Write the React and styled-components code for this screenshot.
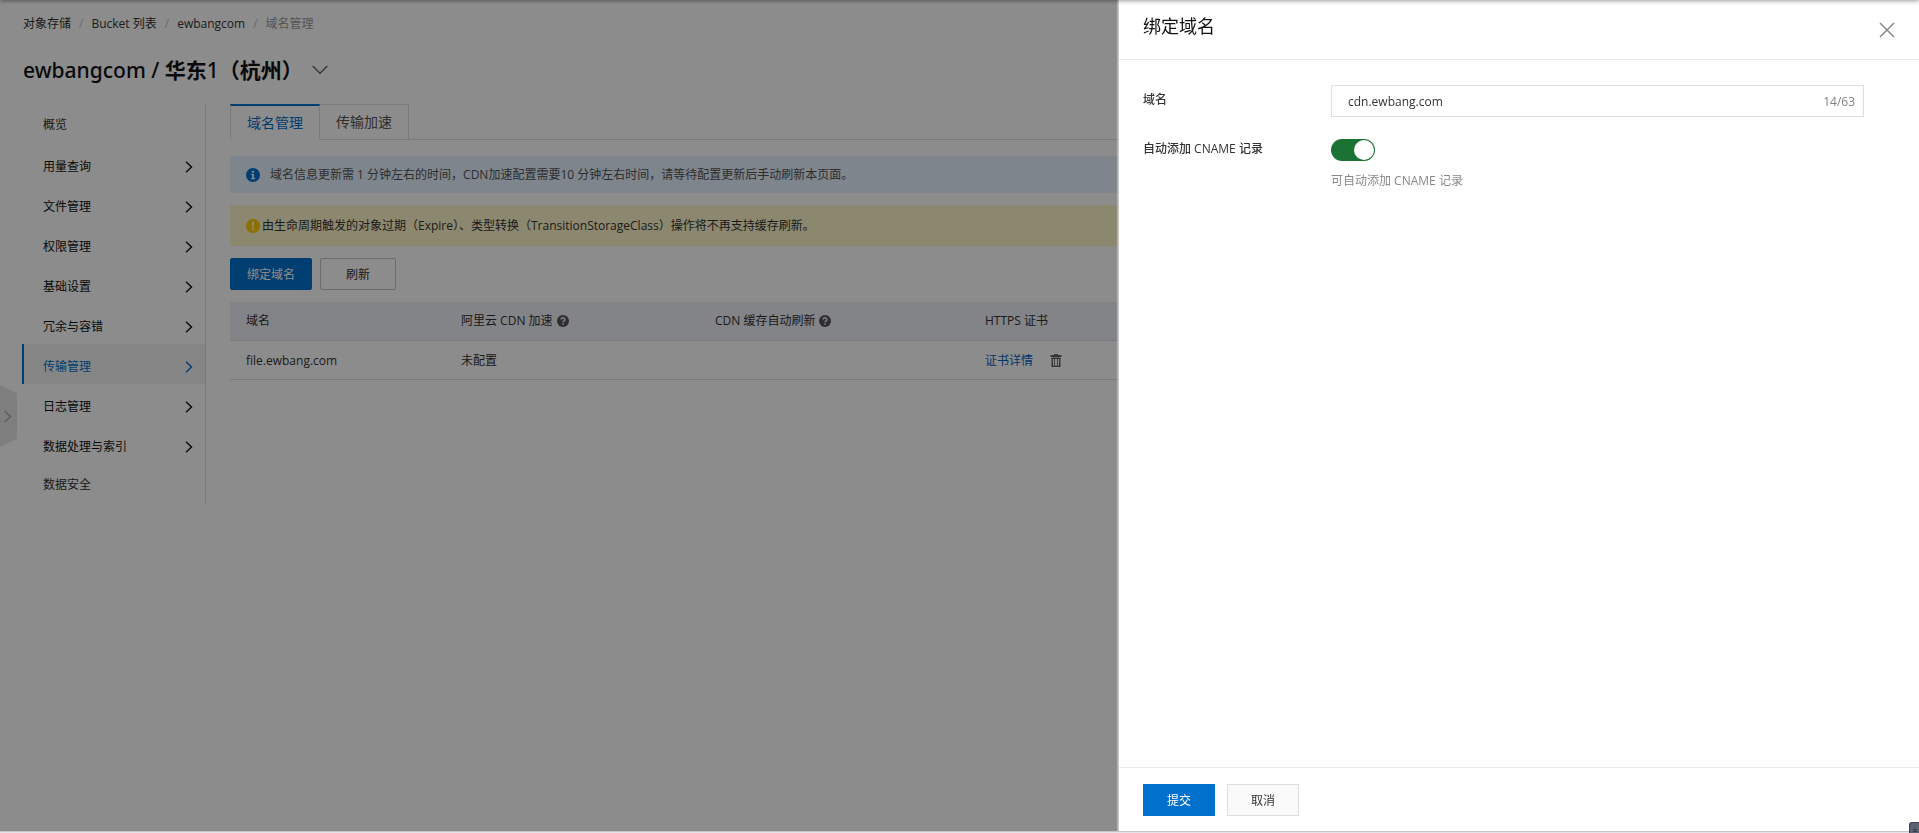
import React, { useState } from "react";
import styled, { createGlobalStyle, css } from "styled-components";

const GlobalStyle = createGlobalStyle`
  *, *::before, *::after { box-sizing: border-box; }
  body {
    margin: 0;
    background: #fff;
    color: #333;
    font: 12px/18px "Open Sans", "Noto Sans CJK SC", sans-serif;
  }
  button, input { font: inherit; color: inherit; }
  a { color: inherit; text-decoration: none; }
`;

const Page = styled.div`
  position: relative;
  min-height: 100vh;
  overflow: hidden;
`;

const TopShadow = styled.div`
  position: fixed;
  inset: -6px 0 auto;
  height: 6px;
  box-shadow: 0 1px 4px rgba(0, 0, 0, 0.4);
  z-index: 30;
`;

const BottomEdge = styled.div`
  position: fixed;
  inset: auto 0 0;
  height: 2px;
  background: #e4e4ea;
  border-top: 1px solid #c4c4cc;
  z-index: 30;
`;

const Header = styled.header`
  padding: 15px 23px 0;
`;

const Breadcrumb = styled.nav`
  display: flex;
  gap: 8px;
  a { color: #333; }
  i { color: #c1c1c1; font-style: normal; }
  span { color: #999; }
`;

const TitleRow = styled.div`
  display: flex;
  align-items: center;
  gap: 9px;
  margin-top: 21px;
  height: 32px;
`;

const Title = styled.h1`
  margin: 0;
  color: #111;
  font-family: "Noto Sans", "Noto Sans CJK SC", sans-serif;
  font-size: 21px;
  line-height: 32px;
  font-weight: 500;
  b { font-weight: 700; }
`;

const IconButton = styled.button`
  display: inline-flex;
  padding: 0;
  border: 0;
  background: none;
  cursor: pointer;
`;

const Body = styled.div`
  display: flex;
  align-items: flex-start;
  gap: 24px;
  margin-top: 18px;
  padding-left: 22px;
`;

const SideNav = styled.nav`
  flex: none;
  width: 184px;
  border-right: 1px solid #dedede;
`;

const NavItem = styled.a`
  display: flex;
  align-items: center;
  justify-content: space-between;
  height: 40px;
  padding: ${(p) => (p.$leaf ? "2px" : "6px")} 12px 0 21px;
  color: ${(p) => (p.$leaf ? "#333" : "#111")};
  ${(p) =>
    p.$active &&
    css`
      padding-left: 19px;
      border-left: 2px solid #0070cc;
      background: #f5f5f5;
      color: #0070cc;
    `}
`;

const Main = styled.main`
  flex: 1;
  min-width: 0;
  padding-right: 24px;
`;

const Tabs = styled.div`
  display: flex;
  height: 36px;
  border-bottom: 1px solid #dedede;
`;

const Tab = styled.button`
  height: 36px;
  padding: 0 16px;
  border: 1px solid #dedede;
  border-left-width: ${(p) => (p.$active ? "1px" : "0")};
  background: #fff;
  color: #555;
  font-size: 14px;
  cursor: pointer;
  ${(p) =>
    p.$active &&
    css`
      border-top: 2px solid #0070cc;
      border-bottom-color: #fff;
      color: #0070cc;
    `}
`;

const Notice = styled.div`
  display: flex;
  align-items: center;
  gap: ${(p) => (p.$warning ? "2px" : "10px")};
  margin-top: ${(p) => (p.$warning ? "12px" : "16px")};
  min-height: ${(p) => (p.$warning ? "41px" : "37px")};
  padding: 0 16px;
  background: ${(p) => (p.$warning ? "#fff7cc" : "#e5f2ff")};
  color: ${(p) => (p.$warning ? "#333" : "#555")};
  svg { flex: none; }
`;

const Button = styled.button`
  height: 32px;
  min-width: ${(p) => (p.$wide ? "72px" : "76px")};
  padding: 2px 16px 0;
  border: 1px solid ${(p) => (p.$primary ? "#0070cc" : p.$wide ? "#dedede" : "#c0c6cc")};
  border-radius: ${(p) => (p.$wide ? "0" : "2px")};
  background: ${(p) => (p.$primary ? "#0070cc" : p.$wide ? "#fafafa" : "#fff")};
  color: ${(p) => (p.$primary ? "#fff" : "#333")};
  cursor: pointer;
`;

const Actions = styled.div`
  display: flex;
  gap: 8px;
  margin: 12px 0;
`;

const Table = styled.table`
  width: 100%;
  border-collapse: separate;
  border-spacing: 0;
  table-layout: fixed;
  th, td {
    height: 39px;
    padding: 0 16px;
    border-bottom: 1px solid #dedede;
    text-align: left;
    font-weight: 400;
    white-space: nowrap;
  }
  th { background: #eff0f7; }
  td { padding-top: 2px; }
`;

const Col = styled.col`
  width: ${(p) => p.$w}px;
`;

const Inline = styled.span`
  display: flex;
  align-items: center;
  gap: ${(p) => p.$gap}px;
`;

const CertLink = styled.a`
  && { color: #0064c8; }
`;

const Handle = styled.button`
  position: fixed;
  left: 0;
  top: 385px;
  width: 17px;
  height: 62px;
  padding: 0;
  border: 0;
  background: none;
  svg { display: block; }
`;

const Overlay = styled.div`
  position: fixed;
  inset: 0;
  z-index: 10;
  display: flex;
  justify-content: flex-end;
  background: rgba(0, 0, 0, 0.45);
`;

const Drawer = styled.section`
  display: flex;
  flex-direction: column;
  width: 801px;
  max-width: 100%;
  border-left: 1px solid #c8c8c8;
  box-shadow: -1px 0 1px rgba(255, 255, 255, 0.3);
  background: #fff;
`;

const DrawerHeader = styled.header`
  display: flex;
  justify-content: space-between;
  align-items: center;
  height: 60px;
  padding: 0 24px;
  border-bottom: 1px solid #ebebeb;
  h2 {
    margin: 0;
    padding-bottom: 8px;
    color: #111;
    font-size: 18px;
    line-height: 26px;
    font-weight: 400;
  }
`;

const Form = styled.form`
  flex: 1;
  display: flex;
  flex-direction: column;
  gap: 22px;
  padding: 25px 55px 0 24px;
`;

const Field = styled.div`
  display: flex;
`;

const Label = styled.label`
  flex: none;
  width: 188px;
  padding-top: ${(p) => (p.$tight ? "1px" : "6px")};
  font-weight: 500;
`;

const InputBox = styled.div`
  flex: 1;
  display: flex;
  align-items: center;
  height: 32px;
  padding: 2px 8px 0 16px;
  border: 1px solid #dedede;
  input {
    flex: 1;
    min-width: 0;
    padding: 0;
    border: 0;
    outline: 0;
    background: none;
  }
  span { color: #808080; }
`;

const Control = styled.div`
  display: flex;
  flex-direction: column;
  gap: 11px;
`;

const Switch = styled.input`
  appearance: none;
  width: 44px;
  height: 22px;
  margin: 0;
  padding: 1px;
  border-radius: 11px;
  background: ${(p) => (p.checked ? "#1a7332" : "#bbb")};
  cursor: pointer;
  &::before {
    content: "";
    display: block;
    width: 20px;
    height: 20px;
    margin-left: ${(p) => (p.checked ? "22px" : "0")};
    border-radius: 50%;
    background: #fff;
  }
`;

const Hint = styled.p`
  margin: 0;
  color: #888;
`;

const DrawerFooter = styled.footer`
  display: flex;
  gap: 12px;
  height: 66px;
  padding: 16px 24px 0;
  border-top: 1px solid #ebebeb;
`;

const Widget = styled.button`
  position: fixed;
  right: 0;
  bottom: 0;
  z-index: 40;
  width: 10px;
  height: 11px;
  padding: 0;
  border: 0;
  background: none;
  svg { display: block; }
`;

const Chevron = ({ color }) => (
  <svg width="8" height="12" viewBox="0 0 8 12" fill="none" stroke={color} strokeWidth="1.4" aria-hidden="true">
    <path d="M1 .8 6.5 6 1 11.2" />
  </svg>
);

const InfoIcon = () => (
  <svg width="14" height="14" viewBox="0 0 14 14" aria-hidden="true">
    <circle cx="7" cy="7" r="7" fill="#0070cc" />
    <path d="M5.9 2.7h2.2v2H5.9zM5.2 5.7h2.9v4.4h1v1.2H5v-1.2h1.1V6.9h-.9z" fill="#e5f2ff" />
  </svg>
);

const WarnIcon = () => (
  <svg width="14" height="14" viewBox="0 0 14 14" aria-hidden="true">
    <circle cx="7" cy="7" r="7" fill="#ffcc00" />
    <path d="M5.9 2.6h2.2L7.8 8.3H6.2zM6 9.3h2v2H6z" fill="#fff7cc" />
  </svg>
);

const HelpIcon = () => (
  <svg width="12" height="12" viewBox="0 0 12 12" aria-hidden="true">
    <circle cx="6" cy="6" r="6" fill="#555" />
    <path d="M4.2 4.6C4.2 2.3 7.9 2.3 7.9 4.5 7.9 5.8 6.1 5.8 6.1 7.3M6.1 8.2v1.5" fill="none" stroke="#eff0f7" strokeWidth="1.5" />
  </svg>
);

const TrashIcon = () => (
  <svg width="12" height="14" viewBox="0 0 12 14" aria-hidden="true">
    <path d="M4 0h4v1h3.5v2H.5V1H4zM1.5 3.5h9V13h-9zM3 5v6.5h6V5z" fill="#666" fillRule="evenodd" />
    <path d="M4.5 5v6.5M7.5 5v6.5" stroke="#777" />
  </svg>
);

const NAV = [
  { label: "概览", leaf: true },
  { label: "用量查询" },
  { label: "文件管理" },
  { label: "权限管理" },
  { label: "基础设置" },
  { label: "冗余与容错" },
  { label: "传输管理", active: true },
  { label: "日志管理" },
  { label: "数据处理与索引" },
  { label: "数据安全", leaf: true },
];

export default function App() {
  const [domain, setDomain] = useState("cdn.ewbang.com");
  const [auto, setAuto] = useState(true);

  return (
    <Page>
      <GlobalStyle />
      <TopShadow />
      <Header>
        <Breadcrumb aria-label="breadcrumb">
          <a href="#oss">对象存储</a>
          <i>/</i>
          <a href="#buckets">Bucket 列表</a>
          <i>/</i>
          <a href="#bucket">ewbangcom</a>
          <i>/</i>
          <span>域名管理</span>
        </Breadcrumb>
        <TitleRow>
          <Title>
            ewbangcom / <b>华东</b>1<b>（杭州）</b>
          </Title>
          <IconButton aria-label="切换 Bucket">
            <svg width="16" height="10" viewBox="0 0 16 10" fill="none" stroke="#666" strokeWidth="1.5">
              <path d="M.7 1 8 8.3 15.3 1" />
            </svg>
          </IconButton>
        </TitleRow>
      </Header>

      <Body>
        <SideNav>
          {NAV.map((n) => (
            <NavItem key={n.label} href="#nav" $leaf={n.leaf} $active={n.active}>
              {n.label}
              {!n.leaf && <Chevron color={n.active ? "#0070cc" : "#111"} />}
            </NavItem>
          ))}
        </SideNav>

        <Main>
          <Tabs role="tablist">
            <Tab role="tab" aria-selected="true" $active>域名管理</Tab>
            <Tab role="tab" aria-selected="false">传输加速</Tab>
          </Tabs>
          <Notice>
            <InfoIcon />
            <span>域名信息更新需 1 分钟左右的时间，CDN加速配置需要10 分钟左右时间，请等待配置更新后手动刷新本页面。</span>
          </Notice>
          <Notice $warning>
            <WarnIcon />
            <span>由生命周期触发的对象过期（Expire）、类型转换（TransitionStorageClass）操作将不再支持缓存刷新。</span>
          </Notice>
          <Actions>
            <Button $primary>绑定域名</Button>
            <Button>刷新</Button>
          </Actions>
          <Table>
            <colgroup>
              <Col $w={215} />
              <Col $w={254} />
              <Col $w={270} />
              <col />
            </colgroup>
            <thead>
              <tr>
                <th>域名</th>
                <th><Inline $gap={4}>阿里云 CDN 加速<HelpIcon /></Inline></th>
                <th><Inline $gap={4}>CDN 缓存自动刷新<HelpIcon /></Inline></th>
                <th>HTTPS 证书</th>
              </tr>
            </thead>
            <tbody>
              <tr>
                <td>file.ewbang.com</td>
                <td>未配置</td>
                <td />
                <td>
                  <Inline $gap={17}>
                    <CertLink href="#cert">证书详情</CertLink>
                    <IconButton aria-label="删除"><TrashIcon /></IconButton>
                  </Inline>
                </td>
              </tr>
            </tbody>
          </Table>
        </Main>
      </Body>

      <Handle aria-label="展开">
        <svg width="17" height="62" viewBox="0 0 17 62" fill="none">
          <path d="M0 0 17 8V54L0 62z" fill="#e6e6e6" />
          <path d="M4.5 26 10.5 31.5 4.5 37" stroke="#aaa" strokeWidth="1.5" />
        </svg>
      </Handle>

      <Overlay>
        <Drawer role="dialog" aria-labelledby="drawer-title">
          <DrawerHeader>
            <h2 id="drawer-title">绑定域名</h2>
            <IconButton aria-label="关闭">
              <svg width="16" height="16" viewBox="0 0 16 16" stroke="#888" strokeWidth="1.5">
                <path d="M1 1 15 15M15 1 1 15" />
              </svg>
            </IconButton>
          </DrawerHeader>
          <Form id="bind-form" onSubmit={(e) => e.preventDefault()}>
            <Field>
              <Label htmlFor="domain">域名</Label>
              <InputBox>
                <input id="domain" type="text" maxLength={63} value={domain} onChange={(e) => setDomain(e.target.value)} />
                <span>{domain.length}/63</span>
              </InputBox>
            </Field>
            <Field>
              <Label htmlFor="auto" $tight>自动添加 CNAME 记录</Label>
              <Control>
                <Switch id="auto" type="checkbox" role="switch" checked={auto} onChange={(e) => setAuto(e.target.checked)} />
                <Hint>可自动添加 CNAME 记录</Hint>
              </Control>
            </Field>
          </Form>
          <DrawerFooter>
            <Button type="submit" form="bind-form" $primary $wide>提交</Button>
            <Button type="button" $wide>取消</Button>
          </DrawerFooter>
        </Drawer>
      </Overlay>

      <BottomEdge />
      <Widget aria-label="工具">
        <svg width="10" height="11" viewBox="0 0 10 11">
          <path d="M0 11V3Q0 0 3 0H10V11z" fill="#3c4050" />
          <path d="M1 11V4Q1 1 4 1H10V11z" fill="#5d6272" />
          <path d="M4 7.5h4M4 9.5h4" stroke="#343845" />
        </svg>
      </Widget>
    </Page>
  );
}
